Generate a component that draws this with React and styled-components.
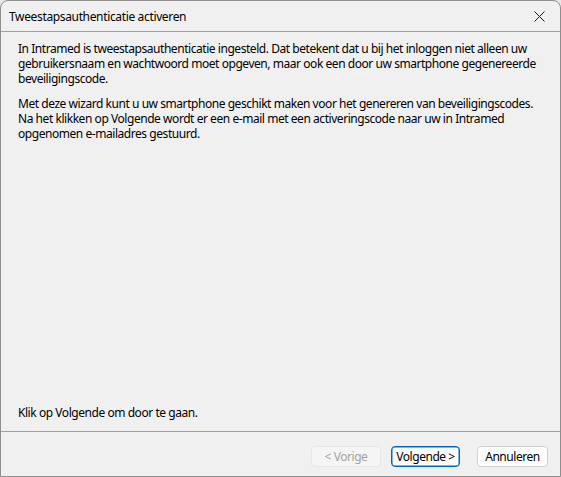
import React from "react";
import styled, { createGlobalStyle } from "styled-components";

const Global = createGlobalStyle`
  html, body { margin: 0; padding: 0; background: #e8e8e8; }
  body { font-family: "Noto Sans", "Segoe UI", sans-serif; }
`;

const Window = styled.div`
  box-sizing: border-box;
  width: 561px;
  height: 477px;
  display: flex;
  flex-direction: column;
  background: #f0f0f0;
  border: 1px solid #8e8e8e;
  border-radius: 8px 8px 0 0;
  overflow: hidden;
  color: #000;
  font-size: 12px;
  letter-spacing: -0.45px;
`;

const TitleBar = styled.div`
  height: 30px;
  display: flex;
  align-items: center;
  justify-content: space-between;
  padding: 0 0 0 8px;
  border-bottom: 1px solid #a0a0a0;
  flex-shrink: 0;
`;

const Title = styled.span`
  font-size: 12px;
  letter-spacing: -0.35px;
`;

const CloseButton = styled.button`
  width: 40px;
  height: 30px;
  border: 0;
  background: transparent;
  display: flex;
  align-items: center;
  justify-content: center;
  padding: 0;
  margin-right: 1px;
`;

const Body = styled.div`
  flex: 1;
  display: flex;
  flex-direction: column;
  padding: 9px 10px 0 17px;
  white-space: nowrap;
`;

const Paragraph = styled.p`
  margin: 0 0 10px 0;
  line-height: 15px;
`;

const Footnote = styled.p`
  margin: auto 0 11px 0;
  line-height: 15px;
`;

const ButtonBar = styled.div`
  height: 45px;
  flex-shrink: 0;
  border-top: 1px solid #a0a0a0;
  display: flex;
  justify-content: flex-end;
  align-items: flex-start;
  padding: 14px 12px 0 0;
  box-sizing: border-box;
  gap: 10px;
`;

const Button = styled.button`
  box-sizing: border-box;
  width: ${(p) => p.$w || 70}px;
  height: 21px;
  margin-left: ${(p) => p.$gap || 0}px;
  font-family: "Noto Sans", "Segoe UI", sans-serif;
  font-size: 12px;
  letter-spacing: -0.45px;
  padding: 0;
  border-radius: 4px;
  background: ${(p) => (p.$disabled ? "#f5f5f5" : "#fdfdfd")};
  color: ${(p) => (p.$disabled ? "#a2a2a2" : "#000")};
  border: 1px solid
    ${(p) => (p.$primary ? "#0067c0" : p.$disabled ? "#e6e6e6" : "#d0d0d0")};
  box-shadow: ${(p) => (p.$primary ? "inset 0 0 0 0.5px #0067c0" : "none")};
  line-height: 18px;
`;

export default function App() {
  return (
    <>
      <Global />
      <Window>
        <TitleBar>
          <Title>Tweestapsauthenticatie activeren</Title>
          <CloseButton aria-label="Sluiten">
            <svg width="11" height="11" viewBox="0 0 11 11">
              <path d="M0.5 0.5 L10.5 10.5 M10.5 0.5 L0.5 10.5" stroke="#1a1a1a" strokeWidth="1" />
            </svg>
          </CloseButton>
        </TitleBar>
        <Body>
          <Paragraph>
            In Intramed is tweestapsauthenticatie ingesteld. Dat betekent dat u bij het inloggen niet alleen uw
            <br />
            gebruikersnaam en wachtwoord moet opgeven, maar ook een door uw smartphone gegenereerde
            <br />
            beveiligingscode.
          </Paragraph>
          <Paragraph>
            Met deze wizard kunt u uw smartphone geschikt maken voor het genereren van beveiligingscodes.
            <br />
            Na het klikken op Volgende wordt er een e-mail met een activeringscode naar uw in Intramed
            <br />
            opgenomen e-mailadres gestuurd.
          </Paragraph>
          <Footnote>Klik op Volgende om door te gaan.</Footnote>
        </Body>
        <ButtonBar>
          <Button $disabled disabled>&lt; Vorige</Button>
          <Button $primary $w={69}>Volgende &gt;</Button>
          <Button $w={71} $gap={7}>Annuleren</Button>
        </ButtonBar>
      </Window>
    </>
  );
}
